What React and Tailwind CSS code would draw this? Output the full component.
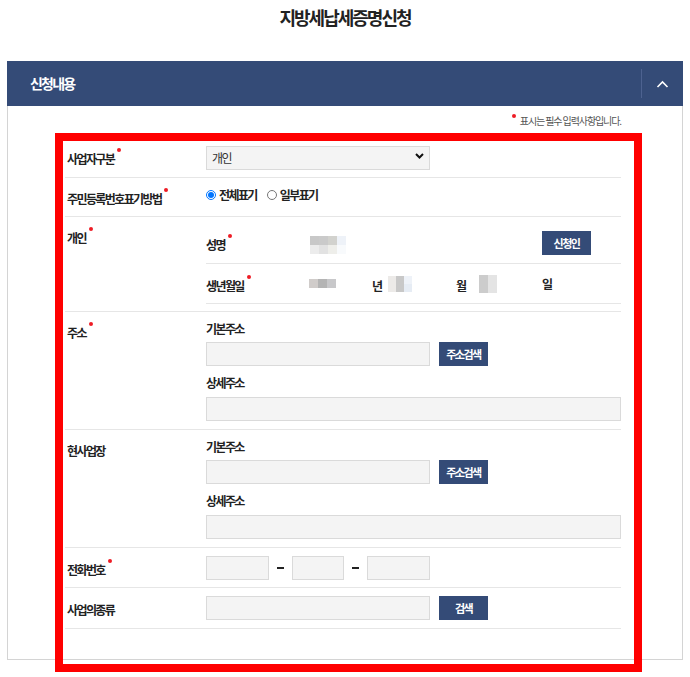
import React from 'react';

const FONT = "font-['Noto_Sans_CJK_KR','Noto_Sans',sans-serif]";

const Dot = () => (
    <span className="absolute -right-[7px] -top-[2px] w-[4px] h-[4px] rounded-full bg-[#ee1c25]" />
);

const Label = ({ children, req }) => (
    <span className="relative text-[12px] font-bold leading-[20px] tracking-[-1.6px] text-[#222]">
        {children}
        {req && <Dot />}
    </span>
);

const Input = ({ className = '' }) => (
    <input type="text" className={`h-[24px] bg-[#f4f4f4] border border-[#dadada] outline-none ${className}`} />
);

const Button = ({ children, className = '' }) => (
    <button className={`h-[24px] bg-[#344b77] text-white text-[11px] font-bold tracking-[-1.5px] leading-[24px] ${className}`}>
        {children}
    </button>
);

// blurred placeholder cells (masked personal data)
const Blur = ({ size, rows }) => (
    <div className="flex flex-col">
        {rows.map((row, i) => (
            <div key={i} className="flex">
                {row.map((c, j) => (
                    <div key={j} style={{ width: size, height: size, background: c }} />
                ))}
            </div>
        ))}
    </div>
);

const Dash = () => (
    <span className="w-[23px] flex justify-center">
        <span className="w-[7px] h-[2px] bg-[#222]" />
    </span>
);

const AddressBlock = () => (
    <div className="flex-1 pt-[7px]">
        <div className="h-[20px] flex items-center"><Label>기본주소</Label></div>
        <div className="mt-[3px] flex items-center gap-[9px]">
            <Input className="w-[224px]" />
            <Button className="w-[49px]">주소검색</Button>
        </div>
        <div className="mt-[7px] h-[20px] flex items-center"><Label>상세주소</Label></div>
        <div className="mt-[4px]">
            <Input className="w-[415px]" />
        </div>
    </div>
);

const App = () => {
    return (
        <div className={`relative w-[690px] h-[677px] overflow-hidden bg-white ${FONT}`}>
            <h1 className="pt-[5px] text-center text-[18px] font-bold leading-[24px] tracking-[-2px] text-[#222]">
                지방세납세증명신청
            </h1>

            <div className="mx-[7px] mt-[32px]">
                <div className="h-[45px] bg-[#344b77] flex items-center pl-[23px]">
                    <span className="text-[14px] font-bold tracking-[-1.8px] text-white">신청내용</span>
                    <div className="ml-auto w-px h-[29px] bg-[#4d6290]" />
                    <div className="w-[41px] flex justify-center">
                        <svg width="13" height="8" viewBox="0 0 13 8" fill="none">
                            <path d="M1.5 7 L6.5 2 L11.5 7" stroke="white" strokeWidth="1.6" />
                        </svg>
                    </div>
                </div>

                <div className="h-[554px] border border-t-0 border-[#d4d4d4]">
                    <div className="pt-[8px] pr-[61px] flex justify-end">
                        <span className="relative pl-[8px] text-[10px] leading-[14px] tracking-[-1.1px] text-[#555]">
                            <span className="absolute left-0 top-0 w-[4px] h-[4px] rounded-full bg-[#ee1c25]" />
                            표시는 필수 입력사항입니다.
                        </span>
                    </div>

                    <div className="mt-[9px] ml-[57px] w-[556px]">
                        {/* 사업자구분 */}
                        <div className="h-[41px] flex items-center border-b border-[#e6e6e6]">
                            <div className="w-[141px] pl-[2px]"><Label req>사업자구분</Label></div>
                            <div className="relative w-[224px]">
                                <select className="w-full h-[24px] pl-[5px] appearance-none bg-[#f4f4f4] border border-[#dadada] text-[12px] tracking-[-1.5px] text-[#333] outline-none">
                                    <option>개인</option>
                                </select>
                                <svg className="absolute right-[6px] top-[9px] pointer-events-none" width="9" height="6" viewBox="0 0 9 6" fill="none">
                                    <path d="M1 1 L4.5 4.5 L8 1" stroke="#111" strokeWidth="2" />
                                </svg>
                            </div>
                        </div>

                        {/* 주민등록번호표기방법 */}
                        <div className="h-[39px] flex items-center border-b border-[#e6e6e6]">
                            <div className="w-[141px] pl-[2px]"><Label req>주민등록번호표기방법</Label></div>
                            <div className="flex items-center -mt-[5px]">
                                <label className="flex items-center gap-[3px]">
                                    <input type="radio" name="mode" defaultChecked className="w-[10px] h-[10px] m-0" />
                                    <Label>전체표기</Label>
                                </label>
                                <label className="flex items-center gap-[3px] ml-[10px]">
                                    <input type="radio" name="mode" className="w-[10px] h-[10px] m-0" />
                                    <Label>일부표기</Label>
                                </label>
                            </div>
                        </div>

                        {/* 개인 */}
                        <div className="h-[95px] flex border-b border-[#e6e6e6]">
                            <div className="w-[141px] pl-[2px] pt-[7px]"><Label req>개인</Label></div>
                            <div className="flex-1 pt-[6px]">
                                <div className="h-[41px] flex items-center border-b border-[#e6e6e6] pr-[30px]">
                                    <div className="w-[104px]"><Label req>성명</Label></div>
                                    <div className="mt-[3px]">
                                        <Blur size={9} rows={[
                                            ['#c8c8c8', '#cacaca', '#d2d2ce', '#eef2f8'],
                                            ['#ececec', '#e2e2e2', '#eeeeea', '#f8fafc'],
                                        ]} />
                                    </div>
                                    <Button className="ml-auto w-[49px]">신청인</Button>
                                </div>
                                <div className="h-[40px] flex items-center border-b border-[#e6e6e6]">
                                    <div className="w-[103px]"><Label req>생년월일</Label></div>
                                    <div className="w-[63px]">
                                        <Blur size={9} rows={[['#d0ccca', '#b4b4b4', '#c8c8ca']]} />
                                    </div>
                                    <div className="w-[16px]"><Label>년</Label></div>
                                    <div className="w-[68px]">
                                        <Blur size={8} rows={[
                                            ['#eceae8', '#c8c8c8', '#eef2f8'],
                                            ['#eceae8', '#c8c8c8', '#e6ecf4'],
                                        ]} />
                                    </div>
                                    <div className="w-[23px]"><Label>월</Label></div>
                                    <div className="w-[63px]">
                                        <Blur size={9} rows={[['#cccccc', '#e4e4e4'], ['#cccccc', '#e4e4e4']]} />
                                    </div>
                                    <Label>일</Label>
                                </div>
                            </div>
                        </div>

                        {/* 주소 */}
                        <div className="h-[118px] flex border-b border-[#e6e6e6]">
                            <div className="w-[141px] pl-[2px] pt-[7px]"><Label req>주소</Label></div>
                            <AddressBlock />
                        </div>

                        {/* 현사업장 */}
                        <div className="h-[118px] flex border-b border-[#e6e6e6]">
                            <div className="w-[141px] pl-[2px] pt-[7px]"><Label>현사업장</Label></div>
                            <AddressBlock />
                        </div>

                        {/* 전화번호 */}
                        <div className="h-[40px] flex items-center border-b border-[#e6e6e6]">
                            <div className="w-[141px] pl-[2px]"><Label req>전화번호</Label></div>
                            <Input className="w-[63px]" />
                            <Dash />
                            <Input className="w-[52px]" />
                            <Dash />
                            <Input className="w-[63px]" />
                        </div>

                        {/* 사업의종류 */}
                        <div className="h-[41px] flex items-center border-b border-[#e6e6e6]">
                            <div className="w-[141px] pl-[2px]"><Label>사업의종류</Label></div>
                            <Input className="w-[224px]" />
                            <Button className="ml-[9px] w-[49px]">검색</Button>
                        </div>
                    </div>
                </div>
            </div>

            {/* highlight frame */}
            <div className="absolute left-[55px] top-[133px] w-[587px] h-[539px] border-[8px] border-[#ff0000] pointer-events-none" />
        </div>
    );
};

export default App;
